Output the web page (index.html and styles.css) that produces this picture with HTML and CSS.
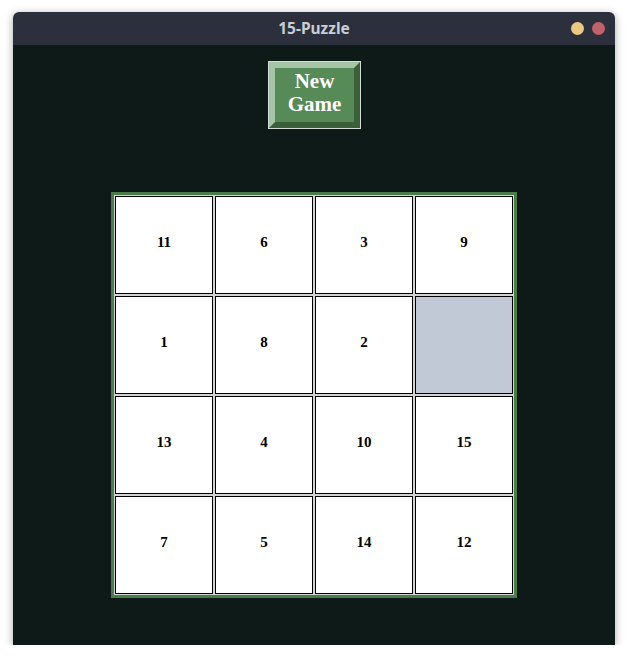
FILE: index.html
```html
<!DOCTYPE html>
<html>
<head>
<meta charset="utf-8">
<title>15-Puzzle</title>
<link rel="stylesheet" href="styles.css">
</head>
<body>
<div class="window">
  <div class="titlebar">
    <div></div>
    <div class="title">15-Puzzle</div>
    <div class="dots"><span class="dot dot-min"></span><span class="dot dot-close"></span></div>
  </div>
  <div class="content">
    <button class="new-game">New<br>Game</button>
    <div class="board">
      <div class="tile">11</div><div class="tile">6</div><div class="tile">3</div><div class="tile">9</div>
      <div class="tile">1</div><div class="tile">8</div><div class="tile">2</div><div class="tile empty"></div>
      <div class="tile">13</div><div class="tile">4</div><div class="tile">10</div><div class="tile">15</div>
      <div class="tile">7</div><div class="tile">5</div><div class="tile">14</div><div class="tile">12</div>
    </div>
  </div>
</div>
</body>
</html>
```

FILE: styles.css
```css
html, body {
  margin: 0;
  padding: 0;
  background: #ffffff;
}

body {
  font-family: "Liberation Serif", "Times New Roman", serif;
}

.window {
  margin: 12px 0 0 13px;
  width: 602px;
  height: 633px;
  border-radius: 6px 6px 0 0;
  overflow: hidden;
  display: flex;
  flex-direction: column;
  box-shadow: 0 2px 8px rgba(0, 0, 0, 0.35);
}

.titlebar {
  height: 33px;
  flex: none;
  background: #2b303c;
  display: grid;
  grid-template-columns: 1fr auto 1fr;
  align-items: center;
}

.title {
  font-family: "Noto Sans", "Open Sans", sans-serif;
  font-weight: bold;
  font-size: 15.5px;
  color: #c9cdd5;
  padding-bottom: 1px;
}

.dots {
  display: flex;
  justify-content: flex-end;
  gap: 8px;
  padding-right: 10px;
}

.dot {
  width: 13px;
  height: 13px;
  border-radius: 50%;
}

.dot-min {
  background: #ebc97f;
}

.dot-close {
  background: #c0616b;
}

.content {
  flex: 1;
  background: #0e1a17;
  display: flex;
  flex-direction: column;
  align-items: center;
  padding-top: 16px;
}

.new-game {
  width: 91px;
  height: 66px;
  margin: 1px 0 64px 1px;
  padding: 0 0 5px 0;
  box-sizing: border-box;
  border-style: solid;
  border-width: 6px;
  border-color: #a6c4a6 #3b5e3b #3b5e3b #a6c4a6;
  box-shadow: 0 0 0 1px #d2dcd2;
  background: #568a56;
  color: #ffffff;
  font-family: "Liberation Serif", "Times New Roman", serif;
  font-weight: bold;
  font-size: 21px;
  line-height: 23px;
  text-align: center;
}

.board {
  display: grid;
  grid-template-columns: repeat(4, 98px);
  grid-auto-rows: 98px;
  gap: 2px;
  padding: 1px;
  background: #d4d4d4;
  border: 3px solid #4b7d4b;
}

.tile {
  box-sizing: border-box;
  border: 1px solid #000000;
  background: #ffffff;
  display: flex;
  align-items: center;
  justify-content: center;
  font-weight: bold;
  font-size: 15px;
  color: #000000;
  padding-bottom: 6px;
}

.tile.empty {
  background: #c2c9d6;
}
```
